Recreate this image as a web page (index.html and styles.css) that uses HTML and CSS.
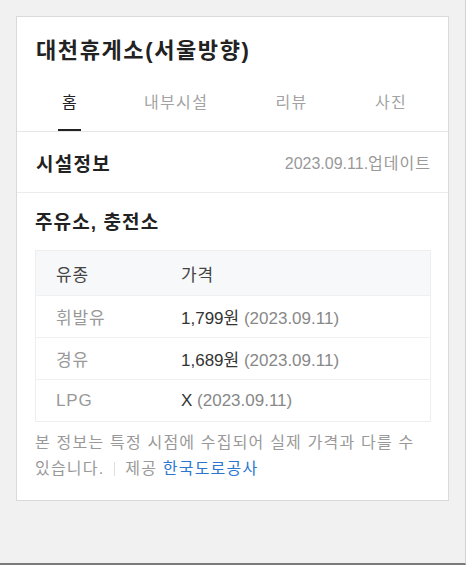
FILE: index.html
```html
<!DOCTYPE html>
<html lang="ko">
<head>
<meta charset="utf-8">
<title>대천휴게소(서울방향)</title>
<link rel="stylesheet" href="styles.css">
</head>
<body>
<div class="frame">
  <div class="card">
    <h1 class="title">대천휴게소(서울방향)</h1>
    <nav class="tabs">
      <a class="tab active">홈</a>
      <a class="tab">내부시설</a>
      <a class="tab">리뷰</a>
      <a class="tab">사진</a>
    </nav>
    <div class="info-head">
      <h2 class="info-title">시설정보</h2>
      <span class="updated">2023.09.11.<span class="hangul">업데이트</span></span>
    </div>
    <section class="fuel">
      <h3 class="fuel-title">주유소, 충전소</h3>
      <div class="table">
        <div class="row head"><span class="c1 hangul">유종</span><span class="c2 hangul">가격</span></div>
        <div class="row"><span class="c1 label">휘발유</span><span class="c2"><span class="price">1,799원</span> <span class="date">(2023.09.11)</span></span></div>
        <div class="row"><span class="c1 label">경유</span><span class="c2"><span class="price">1,689원</span> <span class="date">(2023.09.11)</span></span></div>
        <div class="row"><span class="c1 label">LPG</span><span class="c2"><span class="price">X</span> <span class="date">(2023.09.11)</span></span></div>
      </div>
      <p class="note">본 정보는 특정 시점에 수집되어 실제 가격과 다를 수 있습니다.<span class="sep"></span>제공 <a class="link">한국도로공사</a></p>
    </section>
  </div>
</div>
</body>
</html>
```
FILE: styles.css
```css
* { box-sizing: border-box; }
html, body { margin: 0; padding: 0; }
body {
  font-family: "Liberation Sans", "Noto Sans CJK KR", sans-serif;
  background: #f2f2f2;
  color: #222;
}
.frame {
  width: 466px;
  height: 565px;
  padding: 16px 16px 0 16px;
  background: #f1f1f1;
  border-bottom: 2px solid #7a7a7a;
  border-right: 1px solid #d2d2d2;
}
.card {
  background: #fff;
  border: 1px solid #dadada;
  height: 485px;
}
.title {
  margin: 0;
  padding: 19px 19px 0;
  font-size: 22px;
  line-height: 30px;
  letter-spacing: 1.6px;
  font-weight: bold;
  color: #222;
}
.tabs {
  display: flex;
  justify-content: space-between;
  padding: 0 37px 0 41px;
  border-bottom: 1px solid #e6e6e6;
}
.tab {
  padding: 26px 4px 15px;
  font-size: 16px;
  line-height: 22px;
  letter-spacing: 1.3px;
  color: #a3a3a3;
  border-bottom: 2px solid transparent;
}
.tab.active {
  color: #222;
  border-bottom-color: #222;
  padding-right: 2.7px;
}
.info-head {
  display: flex;
  align-items: center;
  justify-content: space-between;
  height: 61px;
  padding: 0 17px 0 19px;
  border-bottom: 1px solid #ececec;
}
.info-title {
  margin: 0;
  font-size: 19px;
  letter-spacing: 1.3px;
  font-weight: bold;
  color: #222;
}
.updated {
  font-size: 16px;
  color: #999;
}
.updated .hangul { letter-spacing: 1px; }
.fuel {
  padding: 17px 17px 0 18px;
}
.fuel-title {
  margin: 0 0 14px;
  font-size: 19px;
  line-height: 26px;
  letter-spacing: 1.1px;
  font-weight: bold;
  color: #222;
}
.table {
  border: 1px solid #eeeeee;
}
.row {
  display: flex;
  align-items: center;
  height: 42px;
  border-top: 1px solid #f0f0f0;
  font-size: 17px;
}
.row:first-child { border-top: 0; }
.row.head {
  height: 44px;
  background: #f7f8fa;
  color: #444;
}
.c1 { width: 145px; padding-left: 20px; }
.c2 { flex: 1; }
.hangul { letter-spacing: 0.8px; }
.label { color: #999; letter-spacing: 0.8px; }
.price { color: #333; }
.date { color: #888; }
.note {
  margin: 8px 0 0;
  font-size: 16px;
  line-height: 26px;
  letter-spacing: 1.2px;
  color: #999;
}
.sep {
  display: inline-block;
  width: 1px;
  height: 14px;
  background: #dedede;
  margin: 0 10px;
  vertical-align: -2px;
}
.link { color: #2a76d2; }
```
